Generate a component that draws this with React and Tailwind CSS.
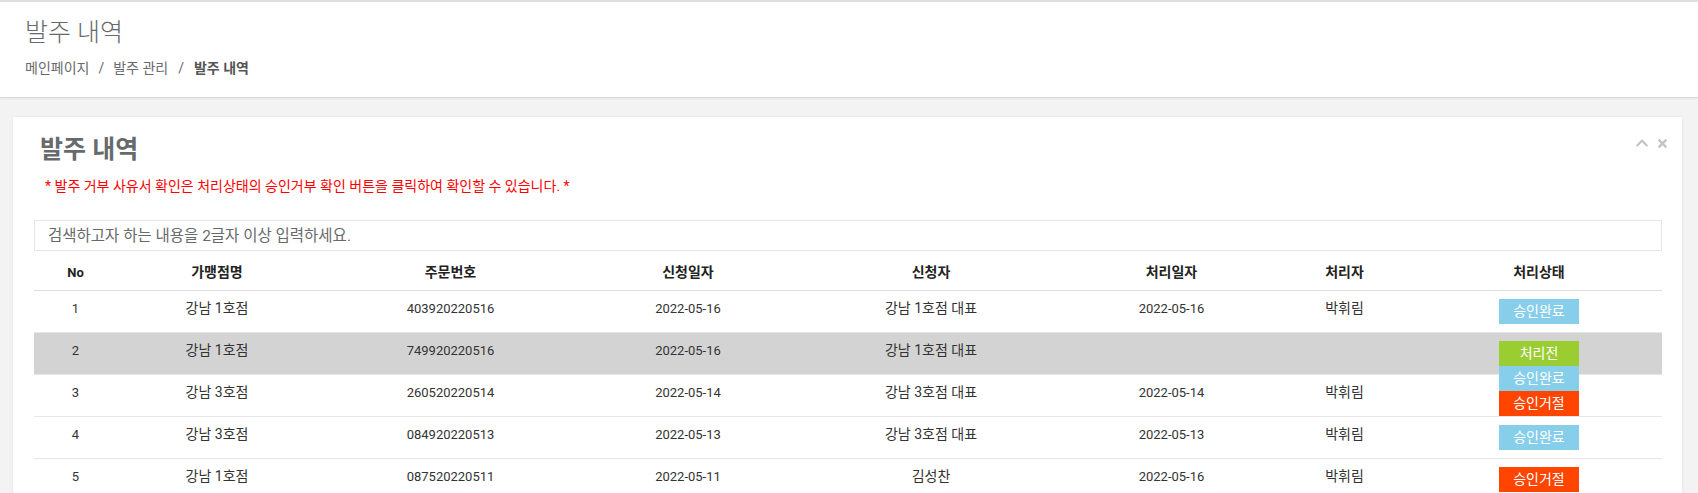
import React from 'react';
import { FaChevronUp, FaTimes } from 'react-icons/fa';

const orders = [
  { no: 1, store: '강남 1호점', orderNo: '403920220516', reqDate: '2022-05-16', requester: '강남 1호점 대표', doneDate: '2022-05-16', handler: '박휘림', status: '승인완료' },
  { no: 2, store: '강남 1호점', orderNo: '749920220516', reqDate: '2022-05-16', requester: '강남 1호점 대표', doneDate: '', handler: '', status: '처리전', open: true },
  { no: 3, store: '강남 3호점', orderNo: '260520220514', reqDate: '2022-05-14', requester: '강남 3호점 대표', doneDate: '2022-05-14', handler: '박휘림', status: '승인완료' },
  { no: 4, store: '강남 3호점', orderNo: '084920220513', reqDate: '2022-05-13', requester: '강남 3호점 대표', doneDate: '2022-05-13', handler: '박휘림', status: '승인완료' },
  { no: 5, store: '강남 1호점', orderNo: '087520220511', reqDate: '2022-05-11', requester: '김성찬', doneDate: '2022-05-16', handler: '박휘림', status: '승인거절' },
];

const badgeColor = {
  '승인완료': 'bg-[#87ceeb]',
  '처리전': 'bg-[#9acd32]',
  '승인거절': 'bg-[#ff4500]',
};

const Badge = ({ label }) => (
  <div className={`w-[80px] h-[25px] leading-[25px] text-center text-white text-[14px] ${badgeColor[label]}`}>
    {label}
  </div>
);

const columns = [
  { title: 'No', w: 'w-[83px] text-[13px]' },
  { title: '가맹점명', w: 'w-[200px] text-[14px]' },
  { title: '주문번호', w: 'w-[267px] text-[14px]' },
  { title: '신청일자', w: 'w-[208px] text-[14px]' },
  { title: '신청자', w: 'w-[278px] text-[14px]' },
  { title: '처리일자', w: 'w-[203px] text-[14px]' },
  { title: '처리자', w: 'w-[143px] text-[14px]' },
  { title: '처리상태', w: 'w-[246px] text-[14px]' },
];

// numbers look 13px, hangul a bit bigger in the original
const cell = 'py-[8px] align-top leading-[19px] text-center';

const App = () => {
  return (
    <div className="min-h-screen bg-[#f3f3f4] font-['Roboto','Noto_Sans_CJK_KR',sans-serif] text-[#333]">
      {/* page heading */}
      <div className="bg-white border-t-2 border-[#dedede] border-b border-b-[#d9d9d9] shadow-[0_1px_2px_rgba(0,0,0,0.06)] pl-[25px] pt-[17px] pb-[20px]">
        <h2 className="text-[25px] leading-[28px] font-light text-[#676a6c]">발주 내역</h2>
        <div className="mt-[12px] flex items-center text-[14px] leading-[18px] text-[#676a6c]">
          <span>메인페이지</span>
          <span className="px-[9px]">/</span>
          <span>발주 관리</span>
          <span className="px-[10px]">/</span>
          <span className="font-bold text-[#555]">발주 내역</span>
        </div>
      </div>

      {/* card */}
      <div className="ml-[13px] mr-[16px] mt-[19px] bg-white shadow-[0_0_3px_rgba(0,0,0,0.08)] pl-[21px] pr-[20px] pt-[15px] pb-[10px]">
        <div className="flex items-start justify-between">
          <h3 className="pl-[6px] text-[25px] leading-[36px] font-bold text-[#676a6c]">발주 내역</h3>
          <div className="mt-[4px] -mr-[7px] flex items-center gap-[7px] text-[#c4c4c4]">
            <FaChevronUp size={14} />
            <FaTimes size={13} />
          </div>
        </div>
        <p className="mt-[8px] pl-[11px] text-[14px] leading-[20px] text-[#ff0000]">
          * 발주 거부 사유서 확인은 처리상태의 승인거부 확인 버튼을 클릭하여 확인할 수 있습니다. *
        </p>

        <input
          type="text"
          placeholder="검색하고자 하는 내용을 2글자 이상 입력하세요."
          className="mt-[24px] block w-full h-[31px] border border-[#e5e6e7] px-[13px] text-[15.5px] text-[#555] placeholder:text-[#676a6c] outline-none"
        />

        <table className="w-full table-fixed border-collapse">
          <thead>
            <tr className="border-b border-[#dddddd]">
              {columns.map((c) => (
                <th key={c.title} className={`${c.w} pt-[12px] pb-[8px] leading-[19px] font-bold text-[#222] text-center`}>
                  {c.title}
                </th>
              ))}
            </tr>
          </thead>
          <tbody>
            {orders.map((o) => (
              <tr key={o.no} className={`border-b border-[#e7e7e7] ${o.open ? 'bg-[#d3d3d3]' : ''}`}>
                <td className={`${cell} text-[13px]`}>{o.no}</td>
                <td className={`${cell} text-[14px]`}>{o.store}</td>
                <td className={`${cell} text-[13px]`}>{o.orderNo}</td>
                <td className={`${cell} text-[13px]`}>{o.reqDate}</td>
                <td className={`${cell} text-[14px]`}>{o.requester}</td>
                <td className={`${cell} text-[13px]`}>{o.doneDate}</td>
                <td className={`${cell} text-[14px]`}>{o.handler}</td>
                <td className="py-[8px] align-top">
                  <div className="relative mx-auto w-[80px]">
                    <Badge label={o.status} />
                    {o.open && (
                      <div className="absolute left-0 top-full z-10">
                        <Badge label="승인완료" />
                        <Badge label="승인거절" />
                      </div>
                    )}
                  </div>
                </td>
              </tr>
            ))}
          </tbody>
        </table>
      </div>
    </div>
  );
};

export default App;
